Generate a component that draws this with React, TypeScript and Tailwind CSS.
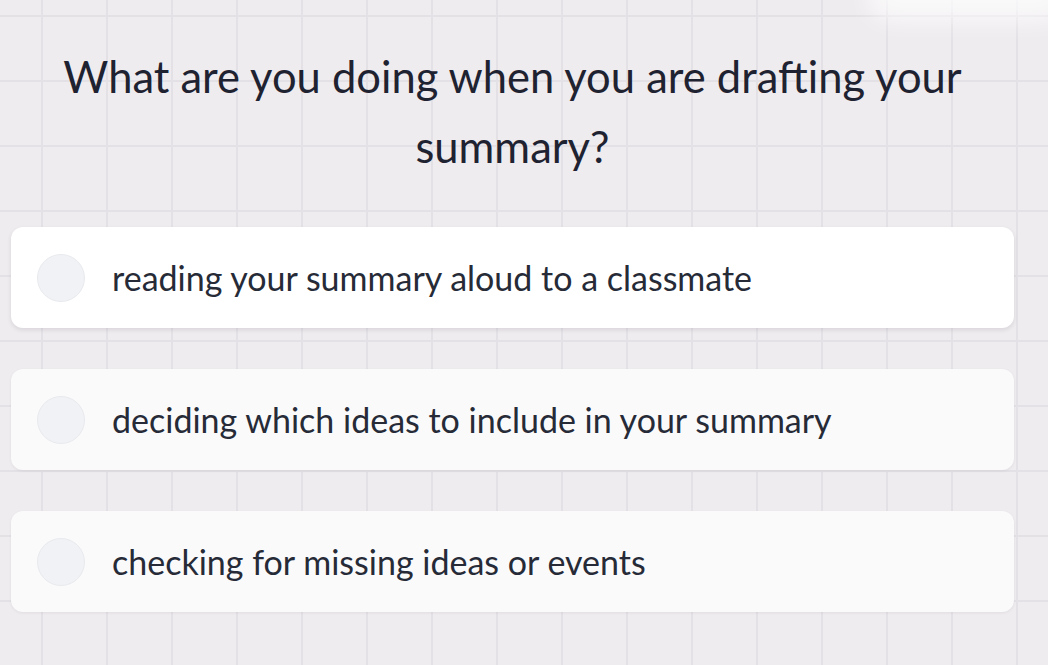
import React from "react";

const options = [
	"reading your summary aloud to a classmate",
	"deciding which ideas to include in your summary",
	"checking for missing ideas or events",
];

interface OptionProps {
	label: string;
	active?: boolean;
}

const Option: React.FC<OptionProps> = ({ label, active }) => {
	return (
		<div
			className={
				active
					? "flex h-[101px] items-center gap-[27px] rounded-[12px] bg-white pl-[26px] shadow-[0_2px_4px_rgba(60,50,70,0.12)]"
					: "flex h-[101px] items-center gap-[27px] rounded-[12px] bg-[#fafafb] pl-[26px] shadow-[0_1px_3px_rgba(60,50,70,0.08)]"
			}
		>
			<span className="h-[48px] w-[48px] shrink-0 rounded-full border border-[#e9eaee] bg-[#f1f2f5]" />
			<span className="text-[34px] leading-none text-[#262b37]">{label}</span>
		</div>
	);
};

export default function App() {
	return (
		<div
			className="relative h-[665px] w-[1048px] overflow-hidden bg-[#efecef] bg-[linear-gradient(to_right,#e4e1e6_2px,transparent_2px),linear-gradient(to_bottom,#e4e1e6_2px,transparent_2px)] bg-[size:65px_65px] bg-[position:41px_15px]"
			style={{ fontFamily: "Lato, 'Noto Sans', sans-serif" }}
		>
			<div className="pointer-events-none absolute -top-[30px] right-[-20px] h-[50px] w-[200px] rounded-full bg-white/70 blur-[12px]" />
			<div className="relative pl-[11px] pr-[34px] pt-[41px]">
				<h1 className="text-center text-[43.5px] leading-[70px] text-[#1f2331]">
					What are you doing when you are drafting your
					<br />
					summary?
				</h1>
				<div className="mt-[46px] flex flex-col gap-[41px]">
					{options.map((o, i) => (
						<Option key={o} label={o} active={i === 0} />
					))}
				</div>
			</div>
		</div>
	);
}
